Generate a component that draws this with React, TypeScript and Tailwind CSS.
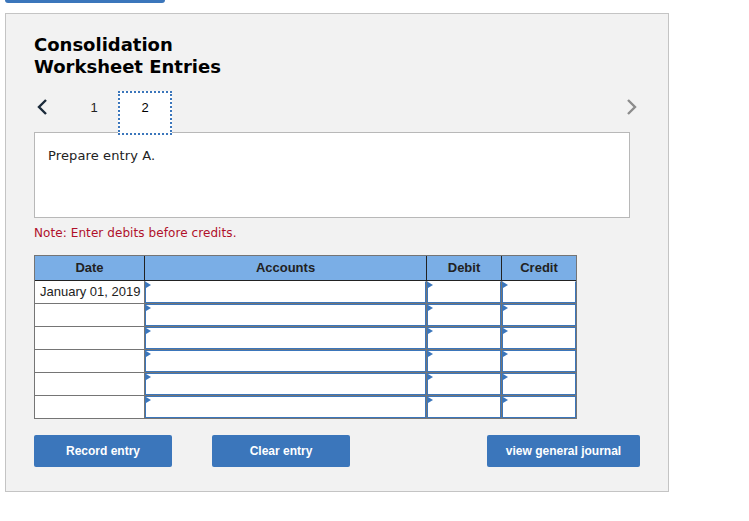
const rows = ['January 01, 2019', '', '', '', '', '']

function EntryCell({ first }: { first: boolean }) {
  return (
    <div className={`relative h-full border border-[#3b76bb] bg-white ${first ? 'border-t-white' : ''}`}>
      <span className="absolute left-0 top-0 h-0 w-0 border-y-[3px] border-l-[5px] border-y-transparent border-l-[#3b76bb]" />
    </div>
  )
}

export default function App() {
  return (
    <div className="h-[521px] w-[749px] overflow-hidden bg-white pl-[5px] font-['DejaVu_Sans',sans-serif]">
      <div className="h-[3px] w-40 rounded-b-[3px] bg-[#3b76bb]" />

      <div className="mt-[10px] h-[479px] w-[664px] border border-[#c4c4c4] bg-[#f2f2f2] pl-[28px] pt-[20px]">
        <h1 className="text-[18px] font-bold leading-[22px] text-black">
          Consolidation
          <br />
          Worksheet Entries
        </h1>

        {/* Tabs */}
        <div className="relative z-10 mt-[13px] flex h-[44px] w-[604px] items-start font-['Liberation_Sans',sans-serif] text-[13px] text-[#222]">
          <svg width="12" height="18" viewBox="0 0 12 18" className="ml-[2px] mt-[7px]">
            <path d="M10 2 L3 9 L10 16" fill="none" stroke="#1b2a3a" strokeWidth="2.4" />
          </svg>
          <span className="ml-[42px] mt-[9px] w-[8px] text-center leading-[15px]">1</span>
          <div className="ml-[20px] flex h-[44px] w-[54px] justify-center border-2 border-dotted border-[#3b76bb] bg-white pt-[7px] leading-[15px] text-black">
            2
          </div>
          <svg width="12" height="18" viewBox="0 0 12 18" className="ml-auto mt-[7px]">
            <path d="M2 2 L9 9 L2 16" fill="none" stroke="#8c8c8c" strokeWidth="2.4" />
          </svg>
        </div>

        <div className="-mt-[3px] h-[86px] w-[596px] border border-[#b8b8b8] bg-white pl-[13px] pt-[14px] text-[13px] leading-[18px] tracking-[0.12px] text-[#222]">
          Prepare entry A.
        </div>

        <p className="mt-[6px] text-[12px] leading-[18px] tracking-[0.08px] text-[#b0102a]">Note: Enter debits before credits.</p>

        {/* Journal table */}
        <div className="mt-[13px] w-[543px] border border-[#757575] font-['Liberation_Sans',sans-serif]">
          <div className="grid h-[25px] grid-cols-[110px_282px_75px_1fr] border-b border-[#222] bg-[#7aaee6] text-center text-[13px] font-bold leading-[23px] text-[#222]">
            <div className="border-r border-[#222]">Date</div>
            <div className="border-r border-[#222]">Accounts</div>
            <div className="border-r border-[#222]">Debit</div>
            <div>Credit</div>
          </div>
          {rows.map((date, i) => (
            <div
              key={i}
              className={`grid grid-cols-[110px_282px_75px_1fr] bg-white ${i < rows.length - 1 ? 'h-[23px] border-b border-[#757575]' : 'h-[22px]'}`}
            >
              <div className="whitespace-nowrap border-r border-[#757575] pl-[5px] text-[13px] leading-[21px] text-[#222]">{date}</div>
              <div className="border-r border-[#757575]">
                <EntryCell first={i === 0} />
              </div>
              <div className="border-r border-[#757575]">
                <EntryCell first={i === 0} />
              </div>
              <div>
                <EntryCell first={i === 0} />
              </div>
            </div>
          ))}
        </div>

        {/* Buttons */}
        <div className="mt-[16px] flex w-[606px] font-['Liberation_Sans',sans-serif] text-[12px] font-bold text-white">
          <button className="h-[32px] w-[138px] rounded-[2px] bg-[#3b76bb]">Record entry</button>
          <button className="ml-[40px] h-[32px] w-[138px] rounded-[2px] bg-[#3b76bb]">Clear entry</button>
          <button className="ml-auto h-[32px] w-[153px] rounded-[2px] bg-[#3b76bb]">view general journal</button>
        </div>
      </div>
    </div>
  )
}
